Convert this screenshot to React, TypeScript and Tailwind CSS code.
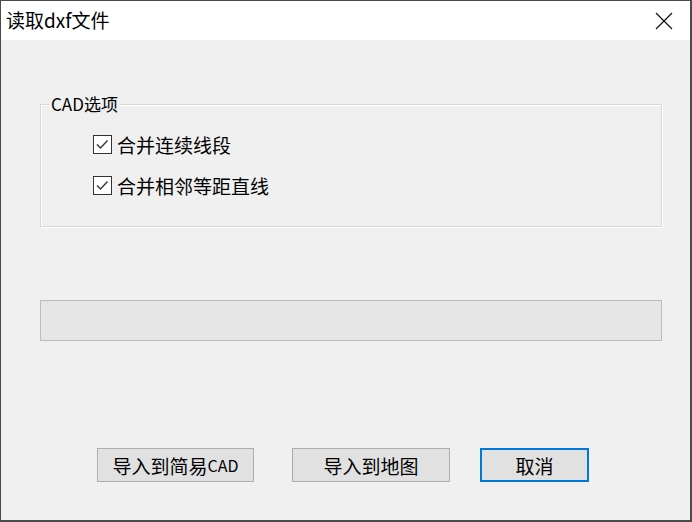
import React from "react";

const font = { fontFamily: '"Noto Sans CJK SC", "Noto Sans", sans-serif' };

function Check({ label }: { label: string }) {
  return (
    <div className="flex items-center h-[22px]">
      <div className="w-[19px] h-[19px] border border-[#333333] bg-white flex items-center justify-center">
        <svg width="17" height="17" viewBox="0 0 17 17">
          <path d="M3 8.5 L6.5 12 L13.5 4.5" fill="none" stroke="#3a3a3a" strokeWidth="1.5" />
        </svg>
      </div>
      <span className="ml-[5px] text-[19px] leading-none text-black">{label}</span>
    </div>
  );
}

function Btn({ children, primary }: { children: React.ReactNode; primary?: boolean }) {
  return (
    <div
      className={
        "h-[34px] flex items-center justify-center bg-[#e1e1e1] text-[19px] leading-none text-black " +
        (primary ? "border-2 border-[#0078d7]" : "border border-[#adadad]")
      }
    >
      {children}
    </div>
  );
}

export default function App() {
  return (
    <div
      style={font}
      className="w-[692px] h-[522px] flex flex-col border-t border-l border-r-2 border-b-2 border-[#4a4a4a] bg-[#f0f0f0] overflow-hidden"
    >
      <div className="h-[39px] bg-white flex items-center justify-between shrink-0">
        <span className="ml-[5px] mt-[-2px] text-[19px] leading-none text-black">读取dxf文件</span>
        <svg className="mr-[17px]" width="18" height="18" viewBox="0 0 18 18">
          <path d="M1 1 L17 17 M17 1 L1 17" stroke="#111" strokeWidth="1.2" fill="none" />
        </svg>
      </div>
      <div className="flex-1 flex flex-col pl-[39px] pr-[28px]">
        <div className="relative mt-[64px] h-[123px] border border-[#d9d9d9] shadow-[inset_1px_1px_0_#ffffff,1px_1px_0_#ffffff]">
          <span className="absolute left-[8px] top-[-11px] px-[2px] bg-[#f0f0f0] text-[17px] leading-[20px] text-black">
            CAD选项
          </span>
          <div className="flex flex-col gap-[19px] pl-[52px] pt-[28px]">
            <Check label="合并连续线段" />
            <Check label="合并相邻等距直线" />
          </div>
        </div>
        <div className="mt-[73px] h-[41px] bg-[#e6e6e6] border border-[#bcbcbc]" />
        <div className="mt-[107px] flex pl-[57px]">
          <div className="w-[157px]">
            <Btn>
              导入到简易<span className="text-[16px]">CAD</span>
            </Btn>
          </div>
          <div className="w-[158px] ml-[38px]">
            <Btn>导入到地图</Btn>
          </div>
          <div className="w-[109px] ml-[30px]">
            <Btn primary>取消</Btn>
          </div>
        </div>
      </div>
    </div>
  );
}
